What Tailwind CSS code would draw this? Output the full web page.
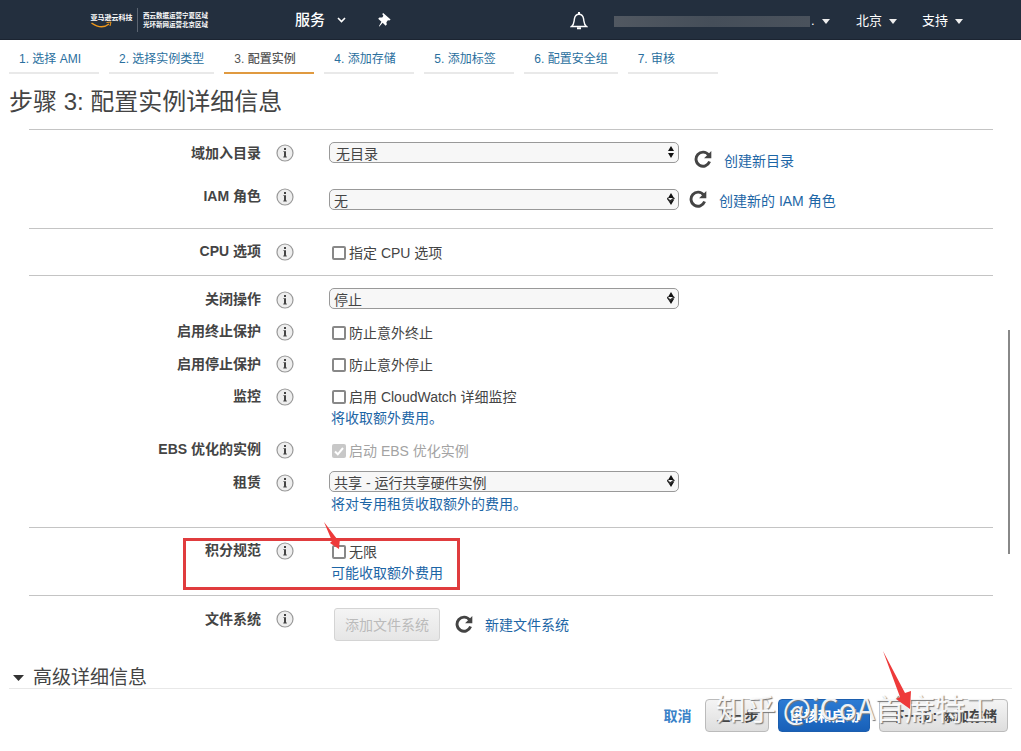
<!DOCTYPE html>
<html lang="zh-CN">
<head>
<meta charset="utf-8">
<title>步骤 3: 配置实例详细信息</title>
<script src="https://cdn.jsdelivr.net/npm/@tailwindcss/browser@4"></script>
</head>
<body class="relative min-h-screen overflow-x-hidden bg-white font-['Liberation_Sans','Noto_Sans_CJK_SC',sans-serif] text-sm leading-5 text-[#444]">
<svg class="hidden" aria-hidden="true">
  <symbol id="info" viewBox="0 0 18 18"><circle cx="9" cy="9" r="8" fill="#eeeeee" stroke="#999" stroke-width="1.2"/><path d="M8 4h2v2H8zM7.400 7.200H10v5.400h.8v.9H7.300v-.9H8V8.100h-.6z" fill="#444"/></symbol>
  <symbol id="refresh" viewBox="0 0 18 18"><path d="M14.6 4.9A7 7 0 1 0 15.6 11.6" fill="none" stroke="#444" stroke-width="2.9"/><path d="M17.3 1v7.2h-7.2z" fill="#444"/></symbol>
  <symbol id="updown" viewBox="0 0 8 12"><path d="M4 0l3 5H1zM4 12l3-5H1z" fill="#111"/></symbol>
  <symbol id="updown-tick" viewBox="0 0 8 12"><path d="M4 0l3 5H1zM4 12l3-5H1z" fill="#111"/><path d="M0 5l3 3.4L7.4 5" fill="none" stroke="#333" stroke-width="1.6"/></symbol>
  <symbol id="caret" viewBox="0 0 8 5"><path d="M0 0h8L4 5z" fill="#eee"/></symbol>
</svg>

<header class="flex h-10 items-center border-b border-[#1b2431] bg-[#232f3e] text-[13px] text-white">
  <a href="#" class="ml-[90px]" aria-label="亚马逊云科技">
    <svg width="120" height="26" viewBox="0 0 240 52" fill="#fff" font-family="Noto Sans CJK SC, sans-serif" font-weight="700">
      <text x="1" y="25" font-size="14">亚马逊云科技</text>
      <path d="M3 32q20 14 35 2" fill="none" stroke="#f0981b" stroke-width="3"/><path d="M33 31l9-1-2 8" fill="none" stroke="#f0981b" stroke-width="2"/>
      <path d="M95 2v48" stroke="#5b6470" stroke-width="2"/>
      <text x="106" y="21" font-size="13">西云数据运营宁夏区域</text>
      <text x="106" y="39" font-size="13">光环新网运营北京区域</text>
    </svg>
  </a>
  <button class="ml-[85px] flex items-center gap-3 text-[15px] font-medium">服务
    <svg width="9" height="6" viewBox="0 0 9 6"><path d="M1 1l3.5 3.5L8 1" fill="none" stroke="#fff" stroke-width="1.6"/></svg>
  </button>
  <button class="ml-8" aria-label="固定">
    <svg width="13" height="14" viewBox="0 0 13 14"><path d="M5.2 0L12.6 6.4 11.4 7.6 9.9 7.2 8.4 9.2 8.8 11.6 7.6 12.8 4.7 9.8 1.4 13.6.9 13.2 3.4 8.7.2 5.7 1.4 4.6 4.2 4.6 5.4 2.8 4.2 1z" fill="#fff"/></svg>
  </button>
  <div class="ml-auto flex items-center pt-[3px]">
    <button aria-label="通知"><svg width="18" height="18" viewBox="0 0 18 18" fill="none" stroke="#fff" stroke-width="1.4"><path d="M1.5 14.5h15c-3-2.500-2.300-4.500-3-8C13 3.800 11.300 2.200 9 2.200S5 3.800 4.500 6.500c-.7 3.500 0 5.500-3 8z"/><path d="M9 0v2M7 16.300h4" stroke-width="2"/></svg></button>
    <button class="ml-[26px] flex items-center" aria-label="账户"><span class="h-[11px] w-[196px] bg-linear-to-r from-[#515861] via-[#454e59] to-[#4a525c]"></span><span class="w-3 pl-px text-left">.</span><svg width="8" height="5"><use href="#caret"/></svg></button>
    <button class="ml-[26px] flex items-center gap-[7px]">北京<svg width="8" height="5"><use href="#caret"/></svg></button>
    <button class="mr-[58px] ml-[25px] flex items-center gap-[7px]">支持<svg width="8" height="5"><use href="#caret"/></svg></button>
  </div>
</header>

<nav class="flex gap-2.5 px-[9px] text-xs text-[#2a6f9e]">
  <a href="#" class="h-[34px] min-w-[90px] border-b-2 border-[#e9e9e9] px-2.5 pt-[11px]">1. 选择 AMI</a>
  <a href="#" class="h-[34px] min-w-[90px] border-b-2 border-[#e9e9e9] px-2.5 pt-[11px]">2. 选择实例类型</a>
  <a href="#" aria-current="step" class="h-[34px] min-w-[90px] border-b-2 border-[#e09a40] px-2.5 pt-[11px] font-medium text-[#555]">3. 配置实例</a>
  <a href="#" class="h-[34px] min-w-[90px] border-b-2 border-[#e9e9e9] px-2.5 pt-[11px]">4. 添加存储</a>
  <a href="#" class="h-[34px] min-w-[90px] border-b-2 border-[#e9e9e9] px-2.5 pt-[11px]">5. 添加标签</a>
  <a href="#" class="h-[34px] min-w-[90px] border-b-2 border-[#e9e9e9] px-2.5 pt-[11px]">6. 配置安全组</a>
  <a href="#" class="h-[34px] min-w-[90px] border-b-2 border-[#e9e9e9] px-2.5 pt-[11px]">7. 审核</a>
</nav>

<main>
  <h1 class="px-[9px] pt-3 text-2xl leading-8">步骤 3: 配置实例详细信息</h1>

  <form class="mr-7 ml-[29px] mt-[11px]">
    <section class="h-[99px] border-t border-[#c4c4c4] pt-3">
      <div class="flex h-[44px] items-start">
        <label for="dir" class="w-[232px] pt-px text-right font-bold">域加入目录</label>
        <svg class="ml-[15px] mt-[2px] size-[18px]"><use href="#info"/></svg>
        <div class="relative ml-[35px] w-[350px]"><select id="dir" class="block h-[21px] w-full appearance-none rounded-[5px] border border-[#999] bg-[#f7f7f7] pt-[3px] pl-1.5 leading-[16px]"><option>无目录</option></select><svg class="pointer-events-none absolute top-1 right-1 h-3 w-2"><use href="#updown"/></svg></div>
        <button type="button" class="mt-2 ml-[15px]" aria-label="刷新"><svg class="size-[18px]"><use href="#refresh"/></svg></button>
        <a href="#" class="mt-[9px] ml-3 text-[#1d66a6]">创建新目录</a>
      </div>
      <div class="flex items-start">
        <label for="iam" class="w-[232px] text-right font-bold">IAM 角色</label>
        <svg class="ml-[15px] mt-[2px] size-[18px]"><use href="#info"/></svg>
        <div class="relative mt-[3px] ml-[35px] w-[350px]"><select id="iam" class="block h-[21px] w-full appearance-none rounded-[5px] border border-[#999] bg-[#f7f7f7] pt-[3px] pl-1 leading-[16px]"><option>无</option></select><svg class="pointer-events-none absolute top-1 right-1 h-3 w-2"><use href="#updown-tick"/></svg></div>
        <button type="button" class="mt-1 ml-2.5" aria-label="刷新"><svg class="size-[18px]"><use href="#refresh"/></svg></button>
        <a href="#" class="mt-[5px] ml-3 text-[#1d66a6]">创建新的 IAM 角色</a>
      </div>
    </section>

    <section class="h-[47px] border-t border-[#c4c4c4] pt-3">
      <div class="flex items-start">
        <span class="w-[232px] text-right font-bold">CPU 选项</span>
        <svg class="ml-[15px] mt-[2px] size-[18px]"><use href="#info"/></svg>
        <label class="mt-[2px] ml-[38px] flex items-center gap-[3px]"><input type="checkbox" class="size-3.5 appearance-none rounded-[2px] border-2 border-[#888] bg-white">指定 CPU 选项</label>
      </div>
    </section>

    <section class="h-[252px] border-t border-[#c4c4c4] pt-3">
      <div class="flex h-[33px] items-start">
        <label for="stop" class="w-[232px] pt-px text-right font-bold">关闭操作</label>
        <svg class="ml-[15px] mt-[3px] size-[18px]"><use href="#info"/></svg>
        <div class="relative ml-[35px] w-[350px]"><select id="stop" class="block h-[21px] w-full appearance-none rounded-[5px] border border-[#999] bg-[#f7f7f7] pt-[3px] pl-1 leading-[16px]"><option>停止</option></select><svg class="pointer-events-none absolute top-1 right-1 h-3 w-2"><use href="#updown-tick"/></svg></div>
      </div>
      <div class="flex h-8 items-start">
        <span class="w-[232px] text-right font-bold">启用终止保护</span>
        <svg class="ml-[15px] mt-[2px] size-[18px]"><use href="#info"/></svg>
        <label class="mt-[2px] ml-[38px] flex items-center gap-[3px]"><input type="checkbox" class="size-3.5 appearance-none rounded-[2px] border-2 border-[#888] bg-white">防止意外终止</label>
      </div>
      <div class="flex h-8 items-start">
        <span class="w-[232px] pt-px text-right font-bold">启用停止保护</span>
        <svg class="ml-[15px] mt-[2px] size-[18px]"><use href="#info"/></svg>
        <label class="mt-[2px] ml-[38px] flex items-center gap-[3px]"><input type="checkbox" class="size-3.5 appearance-none rounded-[2px] border-2 border-[#888] bg-white">防止意外停止</label>
      </div>
      <div class="flex h-[54px] items-start">
        <span class="w-[232px] pt-px text-right font-bold">监控</span>
        <svg class="ml-[15px] mt-[3px] size-[18px]"><use href="#info"/></svg>
        <div class="mt-[2px] ml-[38px]">
          <label class="flex items-center gap-[3px]"><input type="checkbox" class="size-3.5 appearance-none rounded-[2px] border-2 border-[#888] bg-white">启用 CloudWatch 详细监控</label>
          <a href="#" class="mt-px -ml-px block text-[#1d66a6]">将收取额外费用。</a>
        </div>
      </div>
      <div class="flex h-8 items-start">
        <span class="w-[232px] text-right font-bold">EBS 优化的实例</span>
        <svg class="ml-[15px] mt-[2px] size-[18px]"><use href="#info"/></svg>
        <label class="relative mt-[2px] ml-[38px] flex items-center gap-[3px] text-[#a3a3a3]"><input type="checkbox" checked disabled class="size-3.5 appearance-none rounded-[2px] bg-[#c8c8c8]">启动 EBS 优化实例<svg class="absolute top-[3px] left-0 size-3.5" viewBox="0 0 14 14"><path d="M3 7.500l2.800 2.800L11 4" fill="none" stroke="#fff" stroke-width="2"/></svg></label>
      </div>
      <div class="flex items-start">
        <label for="tenancy" class="w-[232px] pt-px text-right font-bold">租赁</label>
        <svg class="ml-[15px] mt-[3px] size-[18px]"><use href="#info"/></svg>
        <div class="ml-[35px] w-[350px]">
          <div class="relative"><select id="tenancy" class="block h-[21px] w-full appearance-none rounded-[5px] border border-[#999] bg-[#f7f7f7] pt-[3px] pl-1 leading-[16px]"><option>共享 - 运行共享硬件实例</option></select><svg class="pointer-events-none absolute top-1 right-1 h-3 w-2"><use href="#updown-tick"/></svg></div>
          <a href="#" class="mt-[2px] ml-[2px] block text-[#1d66a6]">将对专用租赁收取额外的费用。</a>
        </div>
      </div>
    </section>

    <section class="relative h-[68px] border-t border-[#c4c4c4] pt-3">
      <div class="flex items-start">
        <span class="w-[232px] text-right font-bold">积分规范</span>
        <svg class="ml-[15px] mt-[2px] size-[18px]"><use href="#info"/></svg>
        <div class="mt-[2px] ml-[38px]">
          <label class="flex items-center gap-[3px]"><input type="checkbox" class="size-3.5 appearance-none rounded-[2px] border-2 border-[#888] bg-white">无限</label>
          <a href="#" class="mt-px -ml-px block text-[#1d66a6]">可能收取额外费用</a>
        </div>
      </div>
      <div class="pointer-events-none absolute top-2.5 left-[154px] h-[52px] w-[277px] border-3 border-[#e03c3e]"></div>
      <svg class="pointer-events-none absolute -top-1.5 left-[294px]" width="20" height="30" viewBox="0 0 20 30"><path d="M1 0L14 17 17 16 16 27 7 21 9 19z" fill="#ee3a3a"/></svg>
    </section>

    <section class="h-[73px] border-t border-[#c4c4c4] pt-3">
      <div class="flex items-start">
        <span class="w-[232px] pt-px text-right font-bold">文件系统</span>
        <svg class="ml-[15px] mt-[2px] size-[18px]"><use href="#info"/></svg>
        <button type="button" disabled class="ml-10 h-[33px] rounded-[3px] border border-[#d4d4d4] bg-linear-to-b from-[#f4f4f4] to-[#e6e6e6] px-2.5 text-[#bbb]">添加文件系统</button>
        <button type="button" class="mt-[7px] ml-[15px]" aria-label="刷新"><svg class="size-[18px]"><use href="#refresh"/></svg></button>
        <a href="#" class="mt-[7px] ml-3 text-[#1d66a6]">新建文件系统</a>
      </div>
    </section>
  </form>

  <button class="ml-3 flex h-5 items-center gap-2 text-[19px] leading-5"><svg width="13" height="7" viewBox="0 0 13 7"><path d="M1 0h11L6.500 6z" fill="#333"/></svg>高级详细信息</button>
</main>

<footer class="relative mx-[9px] flex items-center justify-end gap-[9px] border-t border-[#e8e8e8] pt-2.5 pr-1 font-bold">
  <a href="#" class="mr-[5px] text-[#3a82c8]">取消</a>
  <button class="h-[33px] rounded-[4px] border border-[#bbb] bg-linear-to-b from-[#f4f4f4] to-[#dedede] px-2.5">上一步</button>
  <button class="h-[33px] rounded-[4px] border border-[#1c5eae] bg-linear-to-b from-[#2c7bd4] to-[#1860b8] px-2.5 text-white">审核和启动</button>
  <button class="h-[33px] rounded-[4px] border border-[#bbb] bg-linear-to-b from-[#f4f4f4] to-[#dedede] px-2.5">下一步: 添加存储</button>
  <span class="pointer-events-none absolute -top-0.5 right-[17px] font-['Noto_Sans_CJK_SC',sans-serif] text-[30px] leading-10 font-normal whitespace-nowrap text-white/90 [text-shadow:1px_1px_1px_#777]">知乎 @iCoA首席特工</span>
  <svg class="pointer-events-none absolute -top-[39px] right-[98px]" width="32" height="60" viewBox="0 0 32 60"><path d="M1 1L23 43 29 41 28 59 14 49 18 47z" fill="#ee3a3a"/></svg>
</footer>

<div class="absolute top-[330px] right-[11px] h-[224px] w-0.5 bg-[#888]"></div>
</body>
</html>
